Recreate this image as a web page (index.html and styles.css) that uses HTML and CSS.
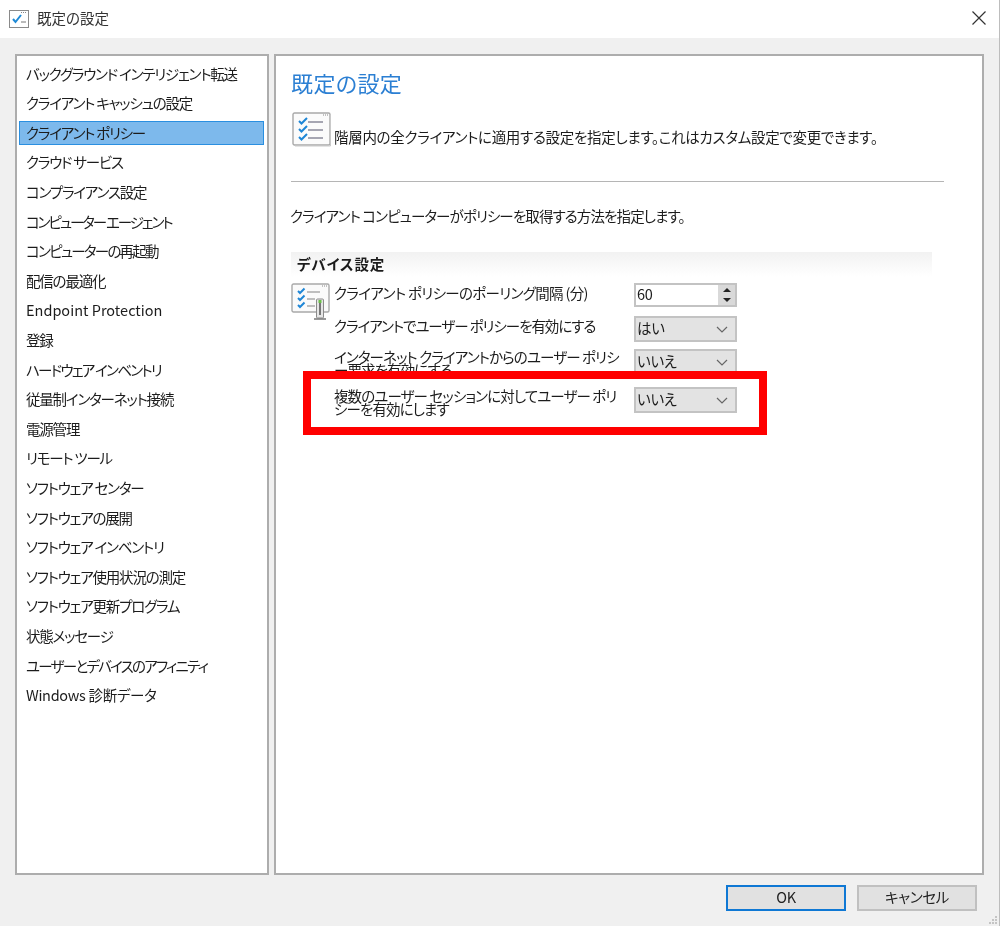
FILE: index.html
```html
<!DOCTYPE html>
<html lang="ja">
<head>
<meta charset="utf-8">
<title>既定の設定</title>
<link rel="stylesheet" href="styles.css">
</head>
<body>
<div class="window">
  <header class="titlebar">
    <svg class="title-icon" viewBox="0 0 20 18" width="20" height="18">
      <rect x="0.5" y="0.5" width="19" height="17" fill="#fff" stroke="#8a8a8a"/>
      <path d="M12 2.500h1M14 2.500h1M16 2.500h1" stroke="#888"/>
      <path d="M4 9l2.500 3L12 5" fill="none" stroke="#1f8ad6" stroke-width="2"/>
      <path d="M12 12h5" stroke="#777"/>
    </svg>
    <span class="title-text">既定の設定</span>
    <svg class="close" viewBox="0 0 14 14" width="14" height="14">
      <path d="M0.500 0.500l13 13M13.500 0.500l-13 13" stroke="#333" stroke-width="1.2" fill="none"/>
    </svg>
  </header>
  <div class="content">
    <nav class="panel nav">
      <div class="nav-item">バックグラウンド インテリジェント転送</div>
      <div class="nav-item">クライアント キャッシュの設定</div>
      <div class="nav-item selected">クライアント ポリシー</div>
      <div class="nav-item">クラウド サービス</div>
      <div class="nav-item">コンプライアンス設定</div>
      <div class="nav-item tighter">コンピューター エージェント</div>
      <div class="nav-item tight">コンピューターの再起動</div>
      <div class="nav-item">配信の最適化</div>
      <div class="nav-item latin">Endpoint Protection</div>
      <div class="nav-item">登録</div>
      <div class="nav-item tight">ハードウェア インベントリ</div>
      <div class="nav-item">従量制インターネット接続</div>
      <div class="nav-item">電源管理</div>
      <div class="nav-item">リモート ツール</div>
      <div class="nav-item">ソフトウェア センター</div>
      <div class="nav-item">ソフトウェアの展開</div>
      <div class="nav-item">ソフトウェア インベントリ</div>
      <div class="nav-item">ソフトウェア使用状況の測定</div>
      <div class="nav-item">ソフトウェア更新プログラム</div>
      <div class="nav-item">状態メッセージ</div>
      <div class="nav-item tight">ユーザーとデバイスのアフィニティ</div>
      <div class="nav-item mixed">Windows 診断データ</div>
    </nav>
    <main class="panel detail">
      <h1 class="heading">既定の設定</h1>
      <div class="intro">
        <svg class="big-icon" viewBox="0 0 40 36" width="40" height="36">
          <rect x="1" y="1" width="37" height="32" rx="1.500" fill="#fbfbfb" stroke="#a9a9a9" stroke-width="1.4"/>
          <path d="M38.500 3v31H3" fill="none" stroke="#c9c9c9"/>
          <path d="M31 3h1M33 3h1M35 3h1" stroke="#888"/>
          <path d="M7 9l2.500 2.500L15 6M7 17l2.500 2.500L15 14M7 25l2.500 2.500L15 22" fill="none" stroke="#1e86d6" stroke-width="2"/>
          <path d="M16 10h15M16 18h15M16 26h15" stroke="#8a8a9a" stroke-width="1.4"/>
        </svg>
        <p class="intro-text">階層内の全クライアントに適用する設定を指定します。これはカスタム設定で変更できます。</p>
      </div>
      <hr class="rule">
      <p class="lead">クライアント コンピューターがポリシーを取得する方法を指定します。</p>
      <div class="section-title">デバイス設定</div>
      <div class="settings">
        <svg class="device-icon" viewBox="0 0 40 38" width="40" height="38">
          <rect x="1" y="1" width="37" height="28" rx="1.500" fill="#fafafa" stroke="#a9a9a9" stroke-width="1.4"/>
          <path d="M31 3h1M33 3h1M35 3h1" stroke="#888"/>
          <path d="M7 8l2 2 4.500-4.500M7 15l2 2 4.500-4.500M7 22l2 2 4.500-4.500" fill="none" stroke="#1e86d6" stroke-width="2"/>
          <path d="M16 9h13M16 16h8M16 23h8" stroke="#aaa" stroke-width="1.4"/>
          <rect x="25.500" y="16" width="7" height="19" rx="1" fill="#e6e6e6" stroke="#8b8b8b"/>
          <rect x="28" y="19" width="2" height="13" fill="#777"/>
          <rect x="27.500" y="17" width="3" height="3" fill="#6cc24a"/>
          <path d="M23 36h12" stroke="#777" stroke-width="1.5"/>
        </svg>
        <div class="rows">
          <div class="row row-spin">
            <div class="label first">クライアント ポリシーのポーリング間隔 (分)</div>
            <div class="control spin">
              <span class="value">60</span>
              <span class="spin-btns"><i class="up"></i><i class="down"></i></span>
            </div>
          </div>
          <div class="row row-yes">
            <div class="label">クライアントでユーザー ポリシーを有効にする</div>
            <div class="control combo"><span class="value">はい</span><svg class="chev" viewBox="0 0 12 7" width="12" height="7"><path d="M1 1l5 5 5-5" fill="none" stroke="#666" stroke-width="1.2"/></svg></div>
          </div>
          <div class="row row-inet">
            <div class="label two clip">インターネット クライアントからのユーザー ポリシー要求を有効にする</div>
            <div class="control combo"><span class="value">いいえ</span><svg class="chev" viewBox="0 0 12 7" width="12" height="7"><path d="M1 1l5 5 5-5" fill="none" stroke="#666" stroke-width="1.2"/></svg></div>
          </div>
          <div class="row row-multi">
            <div class="label two">複数のユーザー セッションに対してユーザー ポリシーを有効にします</div>
            <div class="control combo"><span class="value">いいえ</span><svg class="chev" viewBox="0 0 12 7" width="12" height="7"><path d="M1 1l5 5 5-5" fill="none" stroke="#666" stroke-width="1.2"/></svg></div>
          </div>
        </div>
      </div>
      <div class="highlight"></div>
    </main>
  </div>
  <footer class="footer">
    <button class="btn default">OK</button>
    <button class="btn">キャンセル</button>
    <svg class="grip" viewBox="0 0 10 10" width="10" height="10">
      <path d="M7 1h2v2H7zM4 4h2v2H4zM7 4h2v2H7zM1 7h2v2H1zM4 7h2v2H4zM7 7h2v2H7z" fill="#c4c4c4"/>
    </svg>
  </footer>
</div>
</body>
</html>
```
FILE: styles.css
```css
* { box-sizing: border-box; }
html, body { margin: 0; padding: 0; }
body {
  width: 1002px;
  height: 926px;
  overflow: hidden;
  background: #fff;
  font-family: "Noto Sans CJK JP", "Noto Sans", sans-serif;
  font-feature-settings: "palt";
  color: #1c1c1c;
}
.window {
  width: 1000px;
  height: 926px;
  background: #f0f0f0;
  border-right: 1px solid #bdbdbd;
  display: flex;
  flex-direction: column;
  filter: blur(0.35px);
}
.titlebar {
  height: 38px;
  flex: none;
  background: #fff;
  display: flex;
  align-items: center;
  padding: 0 13px 0 9px;
}
.title-icon { margin-right: 8px; flex: none; }
.title-text { font-size: 14.500px; color: #333; flex: 1; padding-bottom: 3px; }
.close { margin-top: -2px; }
.content {
  height: 821px;
  margin-top: 16px;
  padding-left: 15px;
  display: flex;
  gap: 5px;
  flex: none;
}
.panel {
  background: #fff;
  border: 2px solid #adadad;
}
.nav {
  width: 254px;
  padding: 3px 3px 0 2px;
  display: grid;
  grid-auto-rows: 29.620px;
  align-content: start;
}
.nav-item {
  font-size: 14.500px;
  line-height: 24px;
  height: 24px;
  padding: 0 0 1px 7px;
  margin-top: 3px;
  white-space: nowrap;
  display: flex;
  align-items: center;
  letter-spacing: -1.200px;
}
.nav-item.tight { letter-spacing: -1.750px; }
.nav-item.tighter { letter-spacing: -2.100px; }
.nav-item.latin { letter-spacing: 0; }
.nav-item.mixed { letter-spacing: -0.300px; }
.nav-item.selected {
  background: #7db9ec;
  border: 1px solid #2a8fe0;
  padding: 0 0 0 6px;
}
.detail {
  position: relative;
  width: 710px;
  padding: 9px 38px 0 15px;
}
.heading {
  margin: 0;
  font-size: 22px;
  line-height: 34px;
  font-weight: 400;
  color: #2b7fd3;
  letter-spacing: 0.400px;
}
.intro {
  display: flex;
  align-items: flex-end;
  margin-top: 13px;
  height: 36px;
  padding-left: 1px;
}
.big-icon { flex: none; }
.intro-text {
  margin: 0 0 1px 2px;
  font-size: 14.500px;
  line-height: 20px;
  white-space: nowrap;
  letter-spacing: -0.300px;
}
.rule {
  border: 0;
  height: 1px;
  background: #b5b5b5;
  margin: 33px 0 0;
}
.lead {
  margin: 24px 0 0 -1px;
  font-size: 14.500px;
  line-height: 20px;
  letter-spacing: -0.900px;
}
.section-title {
  margin-top: 26px;
  width: 641px;
  height: 25px;
  padding: 0 0 2px 6px;
  font-size: 14.500px;
  font-weight: 700;
  line-height: 23px;
  letter-spacing: 0.800px;
  background: linear-gradient(to bottom, #f2f2f2, #fff);
}
.settings {
  display: flex;
  margin-top: 6px;
}
.device-icon { flex: none; margin-right: 3px; }
.rows { width: 403px; }
.row {
  display: flex;
  justify-content: space-between;
  align-items: flex-start;
}
.row-spin { height: 33px; }
.row-yes { height: 33px; }
.row-inet { height: 38px; }
.row-multi { height: 40px; }
.label {
  width: 292px;
  font-size: 14.500px;
  line-height: 20px;
  letter-spacing: -1.050px;
}
.label.first { letter-spacing: -0.650px; }
.label.two { line-height: 13px; margin-top: 2px; letter-spacing: -0.900px; }
.label.clip { height: 22px; overflow: hidden; margin-top: 1px; }
.control {
  width: 103px;
  flex: none;
  display: flex;
  align-items: center;
  justify-content: space-between;
  font-size: 14.500px;
  padding-left: 1px;
  border: 2px solid #c3c3c3;
}
.spin { height: 24px; background: #fff; padding-right: 0; }
.combo { height: 26px; background: #e3e3e3; padding-right: 7px; }
.value { line-height: 20px; padding-bottom: 3px; letter-spacing: -0.300px; }
.spin-btns {
  width: 17px;
  height: 20px;
  background: #d9d9d9;
  display: flex;
  flex-direction: column;
  align-items: center;
  justify-content: space-around;
}
.spin-btns i { display: block; width: 0; height: 0; border-left: 4px solid transparent; border-right: 4px solid transparent; }
.spin-btns .up { border-bottom: 4px solid #222; }
.spin-btns .down { border-top: 4px solid #222; }
.highlight {
  position: absolute;
  left: 27px;
  top: 315px;
  width: 464px;
  height: 64px;
  border: 8px solid #ff0000;
}
.footer {
  display: flex;
  justify-content: flex-end;
  gap: 11px;
  padding: 10px 0 0 0;
  flex: 1;
}
.btn {
  width: 120px;
  height: 26px;
  background: #e1e1e1;
  border: 2px solid #c0c0c0;
  font: inherit;
  font-size: 14.500px;
  line-height: 20px;
  color: #222;
  padding: 0 0 2px;
  letter-spacing: -0.300px;
}
.btn.default { border-color: #0f78d4; }
.grip { align-self: flex-end; margin: 0 1px 1px 0; }
```
